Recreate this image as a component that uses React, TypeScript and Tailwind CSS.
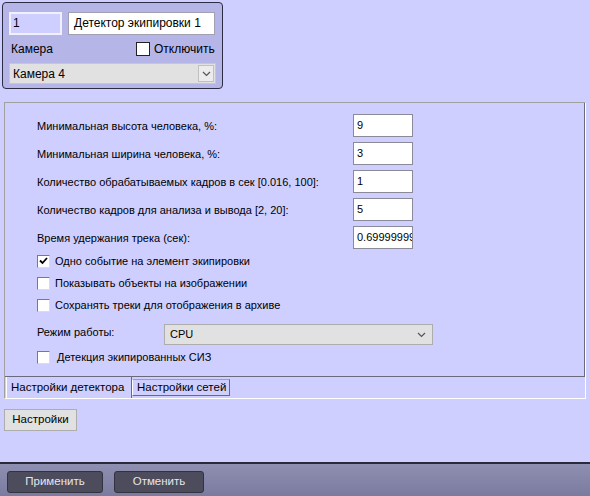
import React from 'react';

const fieldRows = [
  { label: 'Минимальная высота человека, %:', value: '9' },
  { label: 'Минимальная ширина человека, %:', value: '3' },
  { label: 'Количество обрабатываемых кадров в сек [0.016, 100]:', value: '1' },
  { label: 'Количество кадров для анализа и вывода [2, 20]:', value: '5' },
  { label: 'Время удержания трека (сек):', value: '0.69999999' },
];

const checkRows = [
  { label: 'Одно событие на элемент экипировки', checked: true },
  { label: 'Показывать объекты на изображении', checked: false },
  { label: 'Сохранять треки для отображения в архиве', checked: false },
];

function Chevron() {
  return (
    <svg width="9" height="6" viewBox="0 0 9 6" fill="none">
      <path d="M1 1l3.5 3.5L8 1" stroke="#555" strokeWidth="1.2" />
    </svg>
  );
}

function CheckBox({ checked }: { checked: boolean }) {
  return (
    <span className="w-[13px] h-[13px] shrink-0 bg-white border border-t-[#7a7a7a] border-l-[#7a7a7a] border-r-[#dcdcdc] border-b-[#dcdcdc] flex items-center justify-center">
      {checked && (
        <svg width="9" height="8" viewBox="0 0 9 8">
          <path d="M1 3.5l2.5 2.5L8 1" stroke="#000" strokeWidth="1.8" fill="none" />
        </svg>
      )}
    </span>
  );
}

export default function App() {
  return (
    <div
      className="w-[590px] h-[496px] bg-[#cfcfff] flex flex-col text-[11px] text-black overflow-hidden"
      style={{ fontFamily: '"Liberation Sans", Arial, sans-serif' }}
    >
      {/* object header */}
      <div className="ml-[2px] mt-[2px] w-[221px] h-[87px] rounded-[4px] border border-[#2c2c44] bg-[#b5b5e8] px-[6px] pt-[9px] text-[12px]">
        <div className="flex gap-[6px]">
          <div className="w-[53px] h-[23px] border-2 border-[#f0f0ff] bg-[#cfcfff] px-[2px] leading-[19px]">1</div>
          <div className="w-[147px] h-[23px] border border-[#a0a0b0] bg-white px-[5px] leading-[21px] whitespace-nowrap overflow-hidden">Детектор экипировки 1</div>
        </div>
        <div className="flex items-center h-[28px] pl-[2px]">
          <span className="w-[125px]">Камера</span>
          <span className="w-[14px] h-[14px] border border-[#222] bg-white" />
          <span className="ml-[4px]">Отключить</span>
        </div>
        <div className="w-[207px] h-[21px] bg-[#e1e1e1] border border-[#c8c8c8] flex items-center pl-[3px] pr-[1px]">
          <span className="flex-1">Камера 4</span>
          <span className="w-[16px] h-[17px] border border-[#c0c0c0] bg-[#ececec] flex items-center justify-center">
            <Chevron />
          </span>
        </div>
      </div>

      {/* settings panel */}
      <div className="ml-[4px] mt-[13px] w-[582px] h-[297px] border border-t-[#a0a0a0] border-l-[#a0a0a0] border-r-white border-b-white flex flex-col">
        <div className="h-[274px] border-r border-b border-[#6a6a7a] pl-[32px] pt-[11px] flex flex-col">
          {fieldRows.map((r) => (
            <div key={r.label} className="h-[28px] flex items-start">
              <span className="w-[316px] pt-[4px]">{r.label}</span>
              <div className="w-[60px] h-[23px] bg-white border border-[#8a8a98] px-[3px] leading-[21px] overflow-hidden whitespace-nowrap">
                {r.value}
              </div>
            </div>
          ))}
          <div className="-mt-[4px]" />
          {checkRows.map((r) => (
            <div key={r.label} className="h-[22px] flex items-center gap-[5px]">
              <CheckBox checked={r.checked} />
              <span>{r.label}</span>
            </div>
          ))}
          <div className="h-[21px] mt-[8px] flex items-center">
            <span className="w-[127px] pb-[4px]">Режим работы:</span>
            <div className="w-[269px] h-[21px] bg-[#e1e1e1] border border-[#adadad] flex items-center pl-[5px] pr-[6px]">
              <span className="flex-1">CPU</span>
              <Chevron />
            </div>
          </div>
          <div className="h-[24px] flex items-center gap-[7px]">
            <CheckBox checked={false} />
            <span>Детекция экипированных СИЗ</span>
          </div>
        </div>
        <div className="flex h-[21px] items-start text-[11.5px]">
          <div className="w-[126px] h-[21px] ml-[1px] pl-[4px] border-l border-white border-r border-r-[#6a6a7a] flex items-center">Настройки детектора</div>
          <div className="w-[98px] mt-[2px] h-[17px] pl-[4px] border border-t-[#a0a0a0] border-l-white border-r-[#6a6a7a] border-b-[#6a6a7a] flex items-center">Настройки сетей</div>
        </div>
      </div>

      <div className="ml-[4px] mt-[10px]">
        <button className="w-[73px] h-[22px] bg-[#e1e1e1] border border-[#adadad] text-[11.5px]">Настройки</button>
      </div>

      <div className="flex-1" />

      {/* footer */}
      <div className="h-[34px] border-t-2 border-[#2a2a3e] bg-gradient-to-b from-[#8f8fb2] to-[#7b7b9f] flex items-start gap-[11px] pl-[7px] pt-[7px]">
        <button className="w-[96px] h-[22px] rounded-[3px] bg-[#4c4c5c] border border-[#33333f] text-[#e6e6ee] text-[11.5px]">Применить</button>
        <button className="w-[90px] h-[22px] rounded-[3px] bg-[#4c4c5c] border border-[#33333f] text-[#e6e6ee] text-[11.5px]">Отменить</button>
      </div>
    </div>
  );
}
